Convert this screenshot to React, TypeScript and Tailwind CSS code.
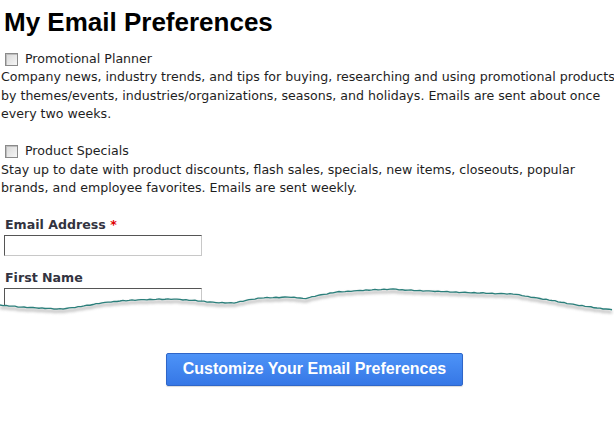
import React from "react";

const basePts: [number, number][] = [
  [0, 305], [10, 306], [20, 307], [40, 308], [57, 309], [66, 308.5], [77, 307], [90, 305], [100, 303],
  [120, 301], [133, 300], [150, 299.5], [173, 299], [188, 300], [200, 301], [215, 302.5], [233, 303],
  [248, 300], [260, 298], [275, 297.5], [290, 297], [300, 298], [304, 299], [315, 296], [337, 292],
  [360, 290.5], [380, 289.5], [394, 289], [404, 290], [430, 291], [454, 292], [480, 293], [514, 294],
  [525, 296], [537, 298], [555, 301], [571, 304], [590, 307], [614, 310],
];

function interp(x: number) {
  for (let i = 0; i < basePts.length - 1; i++) {
    const [x0, y0] = basePts[i];
    const [x1, y1] = basePts[i + 1];
    if (x >= x0 && x <= x1) return y0 + ((y1 - y0) * (x - x0)) / (x1 - x0);
  }
  return basePts[basePts.length - 1][1];
}

const jit = [0, 0.3, -0.25, 0.2, 0, -0.35, 0.25, 0.1, -0.2, 0.35, 0, -0.15];
const wavePts: [number, number][] = [];
for (let x = 0, i = 0; x <= 614; x += 3, i++) wavePts.push([x, interp(x) + jit[i % jit.length]]);

function Wave() {
  const line = wavePts.map(([x, y], i) => `${i === 0 ? "M" : "L"}${x} ${(y - 280).toFixed(2)}`).join(" ");
  const fill = `${line} L614 60 L0 60 Z`;
  return (
    <svg className="absolute left-0 top-[280px]" width={614} height={60} viewBox="0 0 614 60">
      <defs>
        <filter id="sh" x="-5%" y="-50%" width="110%" height="200%">
          <feGaussianBlur stdDeviation="1.8" />
        </filter>
      </defs>
      <path d={fill} fill="white" />
      <path d={line} transform="translate(0,2.5)" stroke="#8a8a8a" strokeWidth={2.5} fill="none" filter="url(#sh)" opacity={0.6} />
      <path d={line} stroke="#2b7f7b" strokeWidth={1.3} fill="none" />
    </svg>
  );
}

function Check() {
  return (
    <span className="inline-block w-[13px] h-[13px] border border-[#8a8a8a] bg-gradient-to-br from-[#d8d8d8] to-[#f6f6f6] shadow-[inset_1px_1px_0_#bdbdbd]" />
  );
}

export default function App() {
  return (
    <div className="relative w-[614px] h-[430px] overflow-hidden bg-white text-[#1e1e1e]" style={{ fontFamily: '"DejaVu Sans", Verdana, sans-serif' }}>
      <div className="pt-[7px]">
        <h1 className="pl-[4px] text-[26px] leading-[30px] font-bold text-black" style={{ fontFamily: '"Liberation Sans", Arial, sans-serif' }}>
          My Email Preferences
        </h1>
        <div className="mt-[13px]">
          <div className="flex items-center pl-[5px] h-[18px] text-[12.6px]">
            <Check />
            <span className="ml-[7px]">Promotional Planner</span>
          </div>
          <p className="pl-[1px] text-[12.6px] leading-[18.5px] whitespace-nowrap">
            Company news, industry trends, and tips for buying, researching and using promotional products
            <br />
            by themes/events, industries/organizations, seasons, and holidays. Emails are sent about once
            <br />
            every two weeks.
          </p>
        </div>
        <div className="mt-[19px]">
          <div className="flex items-center pl-[5px] h-[18px] text-[12.6px]">
            <Check />
            <span className="ml-[7px]">Product Specials</span>
          </div>
          <p className="pl-[1px] text-[12.6px] leading-[18.5px] whitespace-nowrap">
            Stay up to date with product discounts, flash sales, specials, new items, closeouts, popular
            <br />
            brands, and employee favorites. Emails are sent weekly.
          </p>
        </div>
        <div className="mt-[18px] pl-[4px]">
          <label className="block text-[12.6px] leading-[18px] font-bold text-[#333340] pl-[1px]">
            Email Address <span className="text-[#e00000]">*</span>
          </label>
          <div className="mt-[1px] w-[198px] h-[21px] border border-t-[#555] border-l-[#555] border-b-[#c8c8c8] border-r-[#c8c8c8] bg-white" />
          <label className="block mt-[13px] text-[12.6px] leading-[18px] font-bold text-[#333340] pl-[1px]">
            First Name
          </label>
          <div className="mt-[1px] w-[198px] h-[21px] border border-t-[#555] border-l-[#555] border-b-[#c8c8c8] border-r-[#c8c8c8] bg-white" />
        </div>
      </div>
      <Wave />
      <div className="relative pl-[166px] mt-[44px]">
        <button
          className="w-[297px] h-[33px] rounded-[2px] border border-[#2f66c8] bg-gradient-to-b from-[#4d93f7] to-[#3677e6] text-white text-[16px] font-bold shadow-[0_1px_1px_rgba(0,0,0,0.15)]"
          style={{ fontFamily: '"Liberation Sans", Arial, sans-serif' }}
        >
          Customize Your Email Preferences
        </button>
      </div>
    </div>
  );
}
